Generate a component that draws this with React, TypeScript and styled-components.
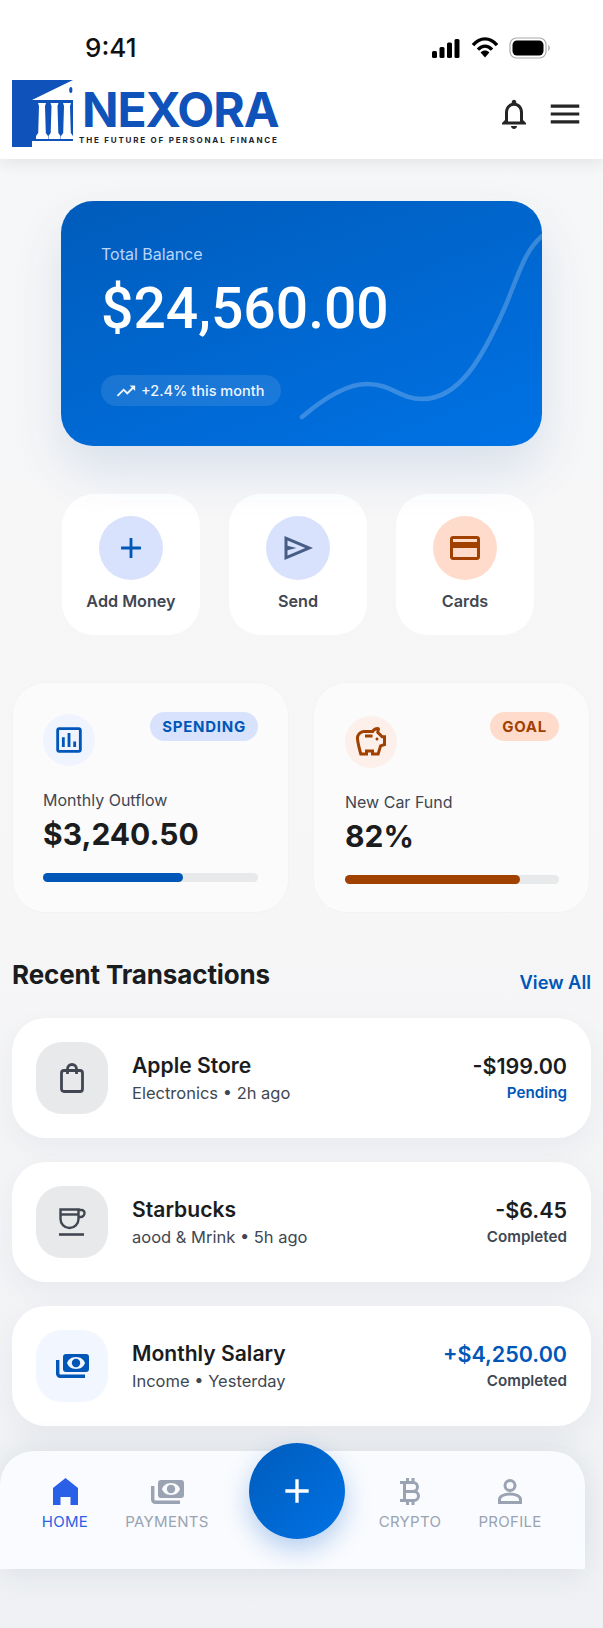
import React from 'react';
import styled, { createGlobalStyle } from 'styled-components';
import {
  MdAdd,
  MdMenu,
  MdOutlineAssessment,
  MdOutlineCreditCard,
  MdOutlineNotifications,
  MdOutlineSavings,
  MdTrendingUp,
} from 'react-icons/md';

const BLUE = '#0057b8';
const RUST = '#a04100';
const INK = '#1a1c1e';
const SLATE = '#414752';

const GlobalStyle = createGlobalStyle`
  html, body {
    margin: 0;
    padding: 0;
    background: #f7f7f8;
  }
  body {
    font-family: Inter, 'Liberation Sans', sans-serif;
    color: ${INK};
  }
  * { box-sizing: border-box; }
`;

const Page = styled.div`
  width: 603px;
  height: 1628px;
  overflow: hidden;
  background: linear-gradient(180deg, #f6f7f8 0%, #f6f6f7 55%, #eff1f4 100%);
`;

const Header = styled.header`
  height: 159px;
  background: #fff;
  box-shadow: 0 4px 14px rgba(30, 40, 60, 0.09);
`;

const StatusBar = styled.div`
  height: 80px;
  padding: 15px 52px 0 85px;
  display: flex;
  align-items: center;
  justify-content: space-between;
`;

const Clock = styled.span`
  font-size: 26px;
  font-weight: 500;
  color: #111;
`;

const StatusIcons = styled.div`
  display: flex;
  align-items: center;
  gap: 10px;
`;

const Brand = styled.div`
  display: flex;
  align-items: center;
  justify-content: space-between;
  padding: 0 19px 0 12px;
`;

const Logo = styled.div`
  display: flex;
  gap: 9px;
`;

const LogoType = styled.div`
  display: flex;
  flex-direction: column;
`;

const Wordmark = styled.span`
  font-size: 48px;
  font-weight: 700;
  line-height: 44px;
  margin-top: 8px;
  letter-spacing: -1.1px;
  color: #0f52ba;
`;

const Tagline = styled.span`
  font-size: 8px;
  font-weight: 700;
  line-height: 10px;
  margin-top: 3px;
  margin-left: -3px;
  letter-spacing: 1.8px;
  white-space: nowrap;
  color: #1d2330;
`;

const HeaderActions = styled.div`
  display: flex;
  align-items: center;
  gap: 14px;
  color: #252525;
`;

const BalanceCard = styled.section`
  position: relative;
  width: 481px;
  height: 245px;
  margin: 42px 0 0 61px;
  padding: 43px 40px 0;
  border-radius: 32px;
  background: linear-gradient(160deg, #005cbb 0%, #0072e5 100%);
  box-shadow: 0 24px 50px rgba(0, 70, 160, 0.12);
`;

const BalanceLabel = styled.div`
  font-size: 16px;
  line-height: 20px;
  color: #b9d5fb;
`;

const BalanceValue = styled.div`
  font-family: Roboto, Inter, sans-serif;
  font-size: 57px;
  font-weight: 500;
  line-height: 64px;
  margin-top: 13px;
  color: #fff;
`;

const TrendPill = styled.div`
  display: inline-flex;
  align-items: center;
  gap: 4px;
  height: 31px;
  margin-top: 34px;
  padding: 0 17px 0 14px;
  border-radius: 16px;
  font-size: 14.5px;
  font-weight: 500;
  background: rgba(255, 255, 255, 0.1);
  color: #eef5ff;
`;

const Spark = styled.svg`
  position: absolute;
  left: 0;
  top: 0;
  pointer-events: none;
`;

const Actions = styled.div`
  display: flex;
  gap: 29px;
  margin: 48px 0 0 62px;
`;

const ActionCard = styled.button`
  width: 138px;
  height: 141px;
  padding: 22px 0 0;
  display: flex;
  flex-direction: column;
  align-items: center;
  border: 0;
  border-radius: 32px;
  background: #fff;
  font-family: inherit;
`;

const ActionCircle = styled.span<{ $bg: string; $fg: string }>`
  width: 64px;
  height: 64px;
  border-radius: 50%;
  display: flex;
  align-items: center;
  justify-content: center;
  background: ${(p) => p.$bg};
  color: ${(p) => p.$fg};
`;

const ActionLabel = styled.span`
  margin-top: 10px;
  font-size: 16.2px;
  line-height: 22px;
  font-weight: 600;
  color: ${SLATE};
`;

const Stats = styled.div`
  display: flex;
  gap: 26px;
  margin: 48px 0 0 13px;
`;

const StatCard = styled.section<{ $inset?: number }>`
  width: 275px;
  height: 229px;
  padding: 30px 30px 0 ${(p) => p.$inset ?? 30}px;
  border-radius: 32px;
  background: #fbfbfb;
  box-shadow: 0 0 0 1px rgba(30, 40, 60, 0.015);
`;

const StatTop = styled.div<{ $drop?: number }>`
  display: flex;
  align-items: flex-start;
  justify-content: space-between;
  height: ${(p) => 77 + (p.$drop ?? 0)}px;
`;

const StatIcon = styled.span<{ $bg: string; $fg: string; $drop?: number }>`
  width: 52px;
  height: 52px;
  margin-top: ${(p) => 1 + (p.$drop ?? 0)}px;
  border-radius: 50%;
  display: flex;
  align-items: center;
  justify-content: center;
  background: ${(p) => p.$bg};
  color: ${(p) => p.$fg};
`;

const Tag = styled.span<{ $bg: string; $fg: string }>`
  height: 29px;
  margin-top: -1px;
  padding: 0 12px;
  border-radius: 15px;
  display: flex;
  align-items: center;
  font-size: 15px;
  font-weight: 700;
  letter-spacing: 0.75px;
  background: ${(p) => p.$bg};
  color: ${(p) => p.$fg};
`;

const StatLabel = styled.div`
  font-size: 16px;
  line-height: 20px;
  color: ${SLATE};
`;

const StatValue = styled.div`
  font-size: 30px;
  font-weight: 700;
  line-height: 36px;
  margin-top: 6px;
  color: ${INK};
`;

const Track = styled.div`
  height: 9px;
  margin-top: 21px;
  border-radius: 5px;
  background: #e8e9ea;
`;

const Fill = styled.div<{ $color: string }>`
  height: 100%;
  border-radius: 5px;
  background: ${(p) => p.$color};
`;

const SectionHead = styled.div`
  display: flex;
  align-items: flex-end;
  justify-content: space-between;
  height: 57px;
  margin-top: 42px;
  padding: 0 12px;
`;

const SectionTitle = styled.h2`
  margin: 0 0 20px;
  font-size: 26px;
  font-weight: 700;
  letter-spacing: -0.13px;
  line-height: 32px;
  color: ${INK};
`;

const ViewAll = styled.a`
  margin-bottom: 18px;
  font-size: 18.3px;
  font-weight: 600;
  line-height: 22px;
  color: ${BLUE};
`;

const TxList = styled.div`
  display: flex;
  flex-direction: column;
  gap: 24px;
  margin: 7px 12px 0;
`;

const TxRow = styled.article`
  height: 120px;
  padding: 0 24px;
  display: flex;
  align-items: center;
  border-radius: 34px;
  background: #fff;
  box-shadow: 0 10px 28px rgba(40, 60, 90, 0.05);
`;

const TxIcon = styled.span<{ $bg: string; $fg: string }>`
  flex: none;
  width: 72px;
  height: 72px;
  border-radius: 26px;
  display: flex;
  align-items: center;
  justify-content: center;
  background: ${(p) => p.$bg};
  color: ${(p) => p.$fg};
`;

const TxBody = styled.div`
  flex: 1;
  margin-left: 24px;
`;

const TxName = styled.div`
  font-size: 21.1px;
  font-weight: 600;
  line-height: 26px;
  color: ${INK};
`;

const TxMeta = styled.div`
  font-size: 16.5px;
  line-height: 22px;
  margin-top: 3px;
  color: ${SLATE};
`;

const TxAmounts = styled.div`
  text-align: right;
`;

const TxAmount = styled.div<{ $income?: boolean }>`
  font-size: 21.5px;
  font-weight: 600;
  line-height: 26px;
  color: ${(p) => (p.$income ? BLUE : INK)};
`;

const TxStatus = styled.div<{ $pending?: boolean }>`
  font-size: 15.2px;
  font-weight: 600;
  line-height: 22px;
  margin-top: 3px;
  color: ${(p) => (p.$pending ? BLUE : SLATE)};
`;

const BottomNav = styled.nav`
  position: relative;
  width: 585px;
  height: 118px;
  margin-top: 25px;
  padding: 27px 0 0 22px;
  display: flex;
  align-items: flex-start;
  border-radius: 34px 34px 0 0;
  background: #f9fbfe;
  box-shadow: 0 -8px 30px rgba(40, 60, 90, 0.06), 0 12px 30px rgba(40, 60, 90, 0.05);
`;

const NavItem = styled.a<{ $active?: boolean; $width: number }>`
  width: ${(p) => p.$width}px;
  display: flex;
  flex-direction: column;
  align-items: center;
  font-size: 15px;
  line-height: 20px;
  letter-spacing: 0.3px;
  color: ${(p) => (p.$active ? '#2a5fe8' : '#9aa3b2')};
`;

const NavSlot = styled.span`
  height: 27px;
  margin-bottom: 7px;
  display: flex;
  align-items: center;
`;

const NavGap = styled.div`
  width: 140px;
`;

const Fab = styled.button`
  position: absolute;
  left: 249px;
  top: -8px;
  width: 96px;
  height: 96px;
  padding: 0;
  border: 0;
  border-radius: 50%;
  display: flex;
  align-items: center;
  justify-content: center;
  color: #fff;
  background: linear-gradient(135deg, #005cbb 0%, #0072e5 100%);
  box-shadow: 0 10px 26px rgba(0, 90, 200, 0.28);
`;

const SignalIcon = () => (
  <svg width="30" height="22" viewBox="0 0 30 22" fill="#000">
    <rect x="1" y="14" width="5" height="7" rx="1.5" />
    <rect x="8.5" y="10" width="5" height="11" rx="1.5" />
    <rect x="16" y="5.5" width="5" height="15.5" rx="1.5" />
    <rect x="23.5" y="2" width="5" height="19" rx="1.5" />
  </svg>
);

const WifiIcon = () => (
  <svg width="28" height="22" viewBox="0 0 28 22" fill="none" stroke="#000" strokeWidth="3.4">
    <path d="M2 8.2C9-.2 19-.2 26 8.2" />
    <path d="M7 12.6c4.4-4.6 9.6-4.6 14 0" />
    <path fill="#000" stroke="none" d="M9.6 15.4c2.8-2.4 6-2.4 8.8 0L14 20.6z" />
  </svg>
);

const BatteryIcon = () => (
  <svg width="42" height="24" viewBox="0 0 42 24">
    <rect x="1" y="2" width="36" height="20" rx="6.5" fill="none" stroke="#aaa" strokeWidth="1.2" />
    <rect x="3.5" y="4.5" width="31" height="15" rx="4.5" fill="#000" />
    <path d="M39 9c1.4.4 2 1.6 2 3s-.6 2.6-2 3z" fill="#bbb" />
  </svg>
);

// Temple mark: blue block, white pediment cut and three white columns
const LogoMark = () => (
  <svg width="61" height="67" viewBox="0 0 61 67">
    <path fill="#0f52ba" d="M0 0H61L20 20H61V61H20V67H0Z" />
    <ellipse cx="58.8" cy="10" rx="1.6" ry="3" fill="#0f52ba" />
    <g fill="#fff">
      <path d="M26 23h8l-1 3 .8 27 2.2 3v3H24v-3l2.2-3 .8-27z" />
      <path d="M38.5 23h8l-1 3 .8 27 2.2 3v3h-12v-3l2.2-3 .8-27z" />
      <path d="M51 23h8l-1 3 .8 27 2.2 3v3H49v-3l2.2-3 .8-27z" />
    </g>
  </svg>
);

const SendIcon = () => (
  <svg width="36" height="36" viewBox="0 -960 960 960" fill="currentColor">
    <path d="M120-160v-640l760 320-760 320Zm80-120 474-200-474-200v140l240 60-240 60v140Z" />
  </svg>
);

const BagIcon = () => (
  <svg width="24" height="30" viewBox="0 0 24 30" fill="none" stroke="currentColor" strokeWidth="2.8">
    <rect x="1.5" y="7.5" width="21" height="21" rx="2.5" />
    <path d="M7.5 11V6a4.5 4.5 0 0 1 9 0v5" />
  </svg>
);

const CupIcon = () => (
  <svg width="28" height="28" viewBox="0 0 28 28" fill="none" stroke="currentColor" strokeWidth="2.4">
    <path d="M2.5 1.5H20.5V11a9 9 0 0 1-18 0Z" />
    <path d="M2.5 6.5H20.5" />
    <path d="M20.5 2h3a3 3 0 0 1 3 3 4 4 0 0 1-4 4h-2" />
    <path d="M1 26.5H26" strokeWidth="2.6" />
  </svg>
);

// Stacked bank notes, shared by the salary row and the nav
const NotesIcon = () => (
  <svg width="33" height="24" viewBox="0 0 33 24" fill="currentColor">
    <path
      fillRule="evenodd"
      d="M10 0H30a3 3 0 0 1 3 3V15a3 3 0 0 1-3 3H10a3 3 0 0 1-3-3V3a3 3 0 0 1 3-3ZM20 3C15 3 12 6 11 9c1 3 4 6 9 6s8-3 9-6c-1-3-4-6-9-6Z"
    />
    <circle cx="20" cy="9" r="4.2" />
    <path d="M0 6h3.4v13.2c0 .8.6 1.4 1.4 1.4H29V24H4.2A4.2 4.2 0 0 1 0 19.8Z" />
  </svg>
);

const HomeIcon = () => (
  <svg width="25" height="27" viewBox="0 0 25 27" fill="currentColor">
    <path d="M12.5 0 25 10V27H17.5V19H7.5V27H0V10Z" />
  </svg>
);

const BitcoinIcon = () => (
  <svg width="22" height="27" viewBox="0 0 22 27" fill="none" stroke="currentColor" strokeWidth="3">
    <path d="M5.5 4.5V22.5M1 4.5H14a4.5 4.5 0 0 1 0 9H5.5M5.5 13.5H15a4.5 4.5 0 0 1 0 9H1" />
    <path d="M8.5 0V4.5M14 0V4.5M8.5 22.5V27M14 22.5V27" />
  </svg>
);

const PersonIcon = () => (
  <svg width="24" height="25" viewBox="0 0 24 25" fill="none" stroke="currentColor" strokeWidth="3">
    <circle cx="12" cy="6.5" r="5" />
    <path d="M1.5 23.5v-3c0-3.4 5-5.5 10.500-5.500s10.500 2.100 10.500 5.500v3z" />
  </svg>
);

const SparkLine = () => (
  <Spark width="481" height="245" viewBox="0 0 481 245" fill="none">
    <path
      d="M241 216C262 198 285 183 306 183C331 183 339 198 361 198C398 198 421 158 444 106C456 78 463 50 481 35"
      stroke="rgba(255,255,255,0.22)"
      strokeWidth="4.5"
      strokeLinecap="round"
    />
  </Spark>
);

const transactions = [
  {
    name: 'Apple Store',
    meta: 'Electronics • 2h ago',
    amount: '-$199.00',
    status: 'Pending',
    pending: true,
    bg: '#e8e9ea',
    fg: SLATE,
    icon: <BagIcon />,
  },
  {
    name: 'Starbucks',
    meta: 'aood & Mrink • 5h ago',
    amount: '-$6.45',
    status: 'Completed',
    bg: '#e8e9ea',
    fg: SLATE,
    icon: <CupIcon />,
  },
  {
    name: 'Monthly Salary',
    meta: 'Income • Yesterday',
    amount: '+$4,250.00',
    status: 'Completed',
    income: true,
    bg: '#f2f6fe',
    fg: BLUE,
    icon: <NotesIcon />,
  },
];

const App = () => (
  <Page>
    <GlobalStyle />
    <Header>
      <StatusBar>
        <Clock>9:41</Clock>
        <StatusIcons>
          <SignalIcon />
          <WifiIcon />
          <BatteryIcon />
        </StatusIcons>
      </StatusBar>
      <Brand>
        <Logo>
          <LogoMark />
          <LogoType>
            <Wordmark>NEXORA</Wordmark>
            <Tagline>THE FUTURE OF PERSONAL FINANCE</Tagline>
          </LogoType>
        </Logo>
        <HeaderActions>
          <MdOutlineNotifications size={36} />
          <MdMenu size={38} />
        </HeaderActions>
      </Brand>
    </Header>

    <BalanceCard>
      <SparkLine />
      <BalanceLabel>Total Balance</BalanceLabel>
      <BalanceValue>$24,560.00</BalanceValue>
      <TrendPill>
        <MdTrendingUp size={22} />
        +2.4% this month
      </TrendPill>
    </BalanceCard>

    <Actions>
      <ActionCard>
        <ActionCircle $bg="#d8e2fd" $fg={BLUE}>
          <MdAdd size={34} />
        </ActionCircle>
        <ActionLabel>Add Money</ActionLabel>
      </ActionCard>
      <ActionCard>
        <ActionCircle $bg="#d8e2fd" $fg="#475d85">
          <SendIcon />
        </ActionCircle>
        <ActionLabel>Send</ActionLabel>
      </ActionCard>
      <ActionCard>
        <ActionCircle $bg="#ffdbcb" $fg={RUST}>
          <MdOutlineCreditCard size={36} />
        </ActionCircle>
        <ActionLabel>Cards</ActionLabel>
      </ActionCard>
    </Actions>

    <Stats>
      <StatCard>
        <StatTop>
          <StatIcon $bg="#f0f4fe" $fg={BLUE}>
            <MdOutlineAssessment size={34} />
          </StatIcon>
          <Tag $bg="#d8e2fd" $fg={BLUE}>SPENDING</Tag>
        </StatTop>
        <StatLabel>Monthly Outflow</StatLabel>
        <StatValue>$3,240.50</StatValue>
        <Track>
          <Fill $color={BLUE} style={{ width: '65%' }} />
        </Track>
      </StatCard>
      <StatCard $inset={31}>
        <StatTop $drop={2}>
          <StatIcon $bg="#fdf0ea" $fg={RUST} $drop={2}>
            <MdOutlineSavings size={36} />
          </StatIcon>
          <Tag $bg="#ffdbcb" $fg={RUST}>GOAL</Tag>
        </StatTop>
        <StatLabel>New Car Fund</StatLabel>
        <StatValue>82%</StatValue>
        <Track>
          <Fill $color={RUST} style={{ width: '82%' }} />
        </Track>
      </StatCard>
    </Stats>

    <SectionHead>
      <SectionTitle>Recent Transactions</SectionTitle>
      <ViewAll>View All</ViewAll>
    </SectionHead>

    <TxList>
      {transactions.map((t) => (
        <TxRow key={t.name}>
          <TxIcon $bg={t.bg} $fg={t.fg}>{t.icon}</TxIcon>
          <TxBody>
            <TxName>{t.name}</TxName>
            <TxMeta>{t.meta}</TxMeta>
          </TxBody>
          <TxAmounts>
            <TxAmount $income={t.income}>{t.amount}</TxAmount>
            <TxStatus $pending={t.pending}>{t.status}</TxStatus>
          </TxAmounts>
        </TxRow>
      ))}
    </TxList>

    <BottomNav>
      <NavItem $active $width={86}>
        <NavSlot><HomeIcon /></NavSlot>
        HOME
      </NavItem>
      <NavItem $width={118}>
        <NavSlot><NotesIcon /></NavSlot>
        PAYMENTS
      </NavItem>
      <NavGap />
      <NavItem $width={88}>
        <NavSlot><BitcoinIcon /></NavSlot>
        CRYPTO
      </NavItem>
      <NavItem $width={112}>
        <NavSlot><PersonIcon /></NavSlot>
        PROFILE
      </NavItem>
      <Fab>
        <MdAdd size={40} />
      </Fab>
    </BottomNav>
  </Page>
);

export default App;
